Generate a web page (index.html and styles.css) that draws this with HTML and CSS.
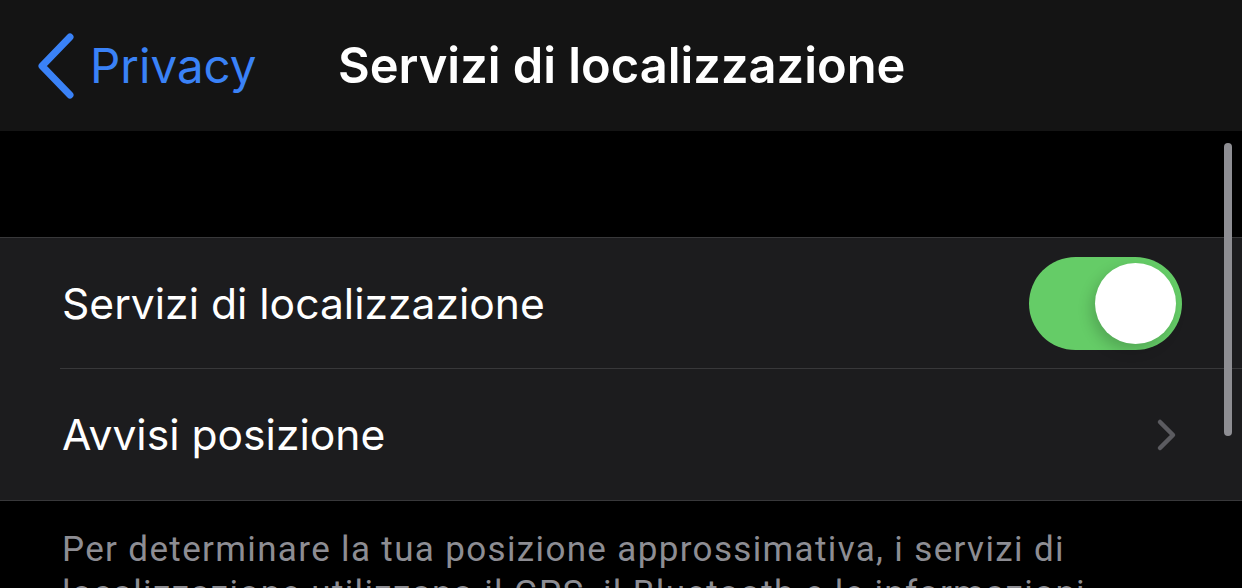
FILE: index.html
```html
<!DOCTYPE html>
<html lang="it">

<head>
    <meta charset="UTF-8">
    <meta name="viewport" content="width=device-width, initial-scale=1.0">
    <title>Servizi di localizzazione</title>
    <link rel="stylesheet" href="styles.css">
</head>

<body>
    <div class="screen">
        <header class="nav-bar">
            <a class="back-btn" href="#">
                <svg class="back-chevron" width="40" height="66" viewBox="0 0 40 66">
                    <path d="M34 4 L6 33 L34 62" fill="none" stroke="#3a82f7" stroke-width="7" stroke-linecap="round" stroke-linejoin="round" />
                </svg>
                <span>Privacy</span>
            </a>
            <h1 class="nav-title">Servizi di localizzazione</h1>
        </header>

        <div class="content">
            <div class="spacer"></div>

            <ul class="group">
                <li class="row">
                    <span class="row-label">Servizi di localizzazione</span>
                    <span class="toggle on"><span class="knob"></span></span>
                </li>
                <li class="row">
                    <span class="row-label">Avvisi posizione</span>
                    <svg class="row-chevron" width="22" height="34" viewBox="0 0 22 34">
                        <path d="M4 4 L17 17 L4 30" fill="none" stroke="#5b5b60" stroke-width="4.5" stroke-linecap="round" stroke-linejoin="round" />
                    </svg>
                </li>
            </ul>

            <p class="footnote">Per determinare la tua posizione approssimativa, i servizi di localizzazione utilizzano il GPS, il Bluetooth e le informazioni relative agli hotspot Wi-Fi e ai ripetitori di rete cellulare.</p>

            <div class="scrollbar"></div>
        </div>
    </div>
</body>

</html>
```

FILE: styles.css
```css
body {
    margin: 0;
    padding: 0;
    background-color: #000;
    font-family: Inter, "Noto Sans", sans-serif;
    overflow: hidden;
}

.screen {
    width: 1242px;
    height: 588px;
    overflow: hidden;
}

.nav-bar {
    height: 131px;
    background-color: #141414;
    display: flex;
    align-items: center;
    padding-left: 36px;
    box-sizing: border-box;
}

.back-btn {
    display: flex;
    align-items: center;
    gap: 14px;
    color: #3a82f7;
    text-decoration: none;
    font-size: 47.5px;
    width: 302px;
}

.back-chevron {
    flex-shrink: 0;
}

.nav-title {
    margin: 0;
    color: #fff;
    font-size: 48.8px;
    font-weight: 600;
}

.content {
    position: relative;
}

.spacer {
    height: 106px;
}

.group {
    list-style: none;
    margin: 0;
    padding: 0 0 0 62px;
    background-color: #1c1c1e;
    border-top: 1px solid #38383a;
    border-bottom: 1px solid #38383a;
}

.row {
    height: 130px;
    display: flex;
    align-items: center;
    justify-content: space-between;
    padding-right: 60px;
    color: #fff;
    font-size: 42.6px;
}

.row + .row {
    height: 131px;
    border-top: 1px solid #38383a;
    margin-left: -2px;
    padding-left: 2px;
}

.toggle {
    width: 153px;
    height: 93px;
    border-radius: 47px;
    background-color: #65cc67;
    position: relative;
}

.toggle .knob {
    position: absolute;
    right: 6px;
    top: 6px;
    width: 81px;
    height: 81px;
    border-radius: 50%;
    background-color: #fff;
    box-shadow: -4px 6px 14px rgba(0, 0, 0, 0.18);
}

.row-chevron {
    margin-right: 4px;
}

.footnote {
    margin: 0;
    padding: 27px 150px 0 62px;
    color: #8d8d93;
    font-family: Roboto, sans-serif;
    font-size: 35px;
    letter-spacing: 1.35px;
    line-height: 44px;
}

.scrollbar {
    position: absolute;
    top: 12px;
    right: 10px;
    width: 8px;
    height: 293px;
    border-radius: 4px;
    background-color: #8e8e93;
}
```
